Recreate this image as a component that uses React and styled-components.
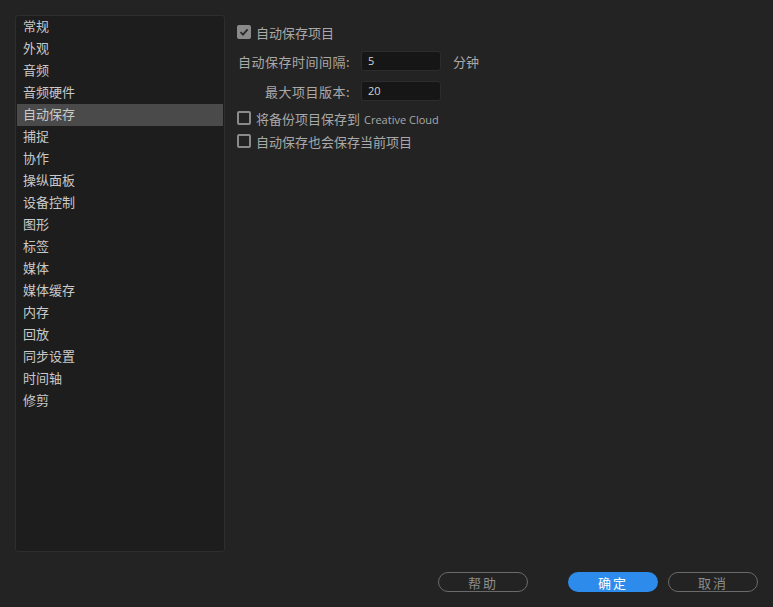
import React from "react";
import styled, { createGlobalStyle } from "styled-components";

const Global = createGlobalStyle`
  html, body { margin: 0; padding: 0; background: #232323; }
  body { font-family: "Noto Sans CJK SC", "Noto Sans", sans-serif; }
  * { box-sizing: border-box; }
`;

const Window = styled.div`
  width: 773px;
  height: 607px;
  background: #232323;
  display: flex;
  flex-direction: column;
  overflow: hidden;
`;

const Main = styled.div`
  display: flex;
  padding: 15px 0 0 15px;
  height: 552px;
`;

const Sidebar = styled.div`
  width: 210px;
  height: 537px;
  background: #1d1d1d;
  border: 1px solid #2e2e2e;
  border-radius: 3px;
  padding: 0 1px;
  display: flex;
  flex-direction: column;
`;

const NavItem = styled.div`
  height: 22px;
  line-height: 19px;
  padding-left: 6px;
  font-size: 13px;
  color: #c9c9c9;
  background: ${(p) => (p.$active ? "#4a4a4a" : "transparent")};
  white-space: nowrap;
`;

const Content = styled.div`
  flex: 1;
  padding: 8px 0 0 12px;
  display: flex;
  flex-direction: column;
`;

const Row = styled.div`
  display: flex;
  align-items: center;
  height: ${(p) => p.$h || 18}px;
  margin-top: ${(p) => p.$mt || 0}px;
`;

const Box = styled.span`
  width: 14px;
  height: 14px;
  border-radius: 2px;
  flex: none;
  display: flex;
  align-items: center;
  justify-content: center;
  background: ${(p) => (p.$checked ? "#8a8a8a" : "transparent")};
  border: ${(p) => (p.$checked ? "none" : "2px solid #8a8a8a")};
`;

const Text = styled.span`
  font-size: 13px;
  color: #a9a9a9;
  margin-left: ${(p) => p.$ml || 0}px;
  white-space: nowrap;
`;

const Latin = styled.span`
  font-family: "Open Sans", "Noto Sans", sans-serif;
  font-size: 11px;
  color: #a9a9a9;
  margin-left: 4px;
`;

const Label = styled.span`
  width: 113px;
  text-align: right;
  font-size: 13px;
  letter-spacing: 0.5px;
  color: #a9a9a9;
  white-space: nowrap;
  margin-right: 11px;
`;

const Field = styled.div`
  width: 80px;
  height: 20px;
  background: #161616;
  border: 1px solid #2c2c2c;
  border-radius: 3px;
  padding-left: 6px;
  font-family: "Open Sans", "Noto Sans", sans-serif;
  font-size: 11px;
  line-height: 18px;
  color: #d4d4d4;
`;

const Footer = styled.div`
  display: flex;
  justify-content: flex-end;
  align-items: center;
  padding: 20px 15px 0 0;
`;

const Button = styled.div`
  width: 90px;
  height: 20px;
  border-radius: 10px;
  display: flex;
  align-items: center;
  justify-content: center;
  font-size: 13px;
  letter-spacing: 2px;
  margin-left: ${(p) => p.$ml || 0}px;
  color: ${(p) => (p.$primary ? "#ffffff" : "#8c8c8c")};
  background: ${(p) => (p.$primary ? "#2d8ceb" : "transparent")};
  border: ${(p) => (p.$primary ? "none" : "1.5px solid #6a6a6a")};
`;

const items = [
  "常规", "外观", "音频", "音频硬件", "自动保存", "捕捉", "协作", "操纵面板",
  "设备控制", "图形", "标签", "媒体", "媒体缓存", "内存", "回放", "同步设置",
  "时间轴", "修剪",
];

const Check = () => (
  <svg width="10" height="10" viewBox="0 0 10 10">
    <path d="M1.5 5.2 L4 7.7 L8.6 2.3" fill="none" stroke="#2a2a2a" strokeWidth="1.8" />
  </svg>
);

export default function App() {
  return (
    <Window>
      <Global />
      <Main>
        <Sidebar>
          {items.map((t) => (
            <NavItem key={t} $active={t === "自动保存"}>{t}</NavItem>
          ))}
        </Sidebar>
        <Content>
          <Row>
            <Box $checked><Check /></Box>
            <Text $ml={5}>自动保存项目</Text>
          </Row>
          <Row $h={20} $mt={10}>
            <Label>自动保存时间间隔:</Label>
            <Field>5</Field>
            <Text $ml={12}>分钟</Text>
          </Row>
          <Row $h={20} $mt={10}>
            <Label>最大项目版本:</Label>
            <Field>20</Field>
          </Row>
          <Row $mt={8}>
            <Box />
            <Text $ml={5}>将备份项目保存到<Latin>Creative Cloud</Latin></Text>
          </Row>
          <Row $mt={5}>
            <Box />
            <Text $ml={5}>自动保存也会保存当前项目</Text>
          </Row>
        </Content>
      </Main>
      <Footer>
        <Button>帮助</Button>
        <Button $primary $ml={40}>确定</Button>
        <Button $ml={10}>取消</Button>
      </Footer>
    </Window>
  );
}
